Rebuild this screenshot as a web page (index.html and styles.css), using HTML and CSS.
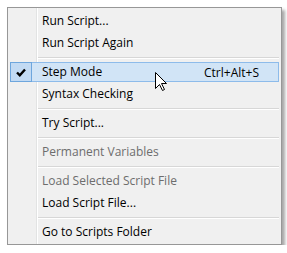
FILE: index.html
```html
<!DOCTYPE html>
<html lang="en">
<head>
    <meta charset="UTF-8">
    <title>Script Menu</title>
    <link rel="stylesheet" href="styles.css">
</head>
<body>
    <!-- Menú contextual de scripts -->
    <div class="menu">
        <div class="item"><span class="icon"></span><span class="label">Run Script...</span></div>
        <div class="item"><span class="icon"></span><span class="label">Run Script Again</span></div>
        <div class="sep"></div>
        <div class="item hot">
            <span class="icon checked">
                <svg width="10" height="9" viewBox="0 0 10 9"><path d="M1 4.5 L3.8 7.3 L9 1.5" fill="none" stroke="#000" stroke-width="2.4"/></svg>
            </span>
            <span class="label">Step Mode</span>
            <span class="key">Ctrl+Alt+S</span>
        </div>
        <div class="item"><span class="icon"></span><span class="label">Syntax Checking</span></div>
        <div class="sep"></div>
        <div class="item"><span class="icon"></span><span class="label">Try Script...</span></div>
        <div class="sep"></div>
        <div class="item disabled"><span class="icon"></span><span class="label">Permanent Variables</span></div>
        <div class="sep"></div>
        <div class="item disabled"><span class="icon"></span><span class="label">Load Selected Script File</span></div>
        <div class="item"><span class="icon"></span><span class="label">Load Script File...</span></div>
        <div class="sep"></div>
        <div class="item"><span class="icon"></span><span class="label">Go to Scripts Folder</span></div>

        <!-- Puntero del ratón -->
        <svg class="cursor" width="13" height="20" viewBox="0 0 13 20">
            <path d="M0.5 0.5 L0.5 16.5 L4.5 12.5 L7.5 18.5 L9.5 17.5 L6.5 11.5 L11.5 11.5 Z" fill="#fff" stroke="#000" stroke-width="1"/>
        </svg>
    </div>
</body>
</html>
```

FILE: styles.css
```css
body {
    margin: 0;
    background-color: #ffffff;
    font-family: "Open Sans", "Noto Sans", sans-serif;
    font-size: 12px;
    color: #000000;
}

.menu {
    position: relative;
    width: 270px;
    margin: 7px 0 0 7px;
    padding: 2px 1px 1px 2px;
    border: 1px solid #979797;
    background:
        linear-gradient(to right, transparent 28px, #e2e3e3 28px, #e2e3e3 29px, #ffffff 29px, #ffffff 30px, transparent 30px),
        #f0f0f0;
    box-shadow: 3px 3px 3px rgba(0, 0, 0, 0.35);
}

.item {
    display: flex;
    align-items: center;
    height: 22px;
    box-sizing: border-box;
}

.icon {
    width: 22px;
    height: 20px;
    margin-right: 10px;
    display: flex;
    align-items: center;
    justify-content: center;
    box-sizing: border-box;
}

.label {
    flex: 1;
    line-height: 20px;
}

.key {
    margin-right: 19px;
}

.disabled {
    color: #6d6d6d;
}

/* Elemento resaltado */
.hot {
    height: 20px;
    margin: 1px 1px 1px 0;
    background-color: #d1e4f6;
    border: 1px solid #8dbbea;
}

.hot .icon {
    margin-left: -1px;
}

.checked {
    background-color: #c2daf3;
    border: 1px solid #6ea6dd;
}

.sep {
    height: 7px;
    margin-left: 28px;
    margin-right: 1px;
    background: linear-gradient(to bottom, transparent 3px, #d7d7d7 3px, #d7d7d7 4px, #ffffff 4px, #ffffff 5px, transparent 5px);
}

.cursor {
    position: absolute;
    left: 147px;
    top: 64px;
}
```
